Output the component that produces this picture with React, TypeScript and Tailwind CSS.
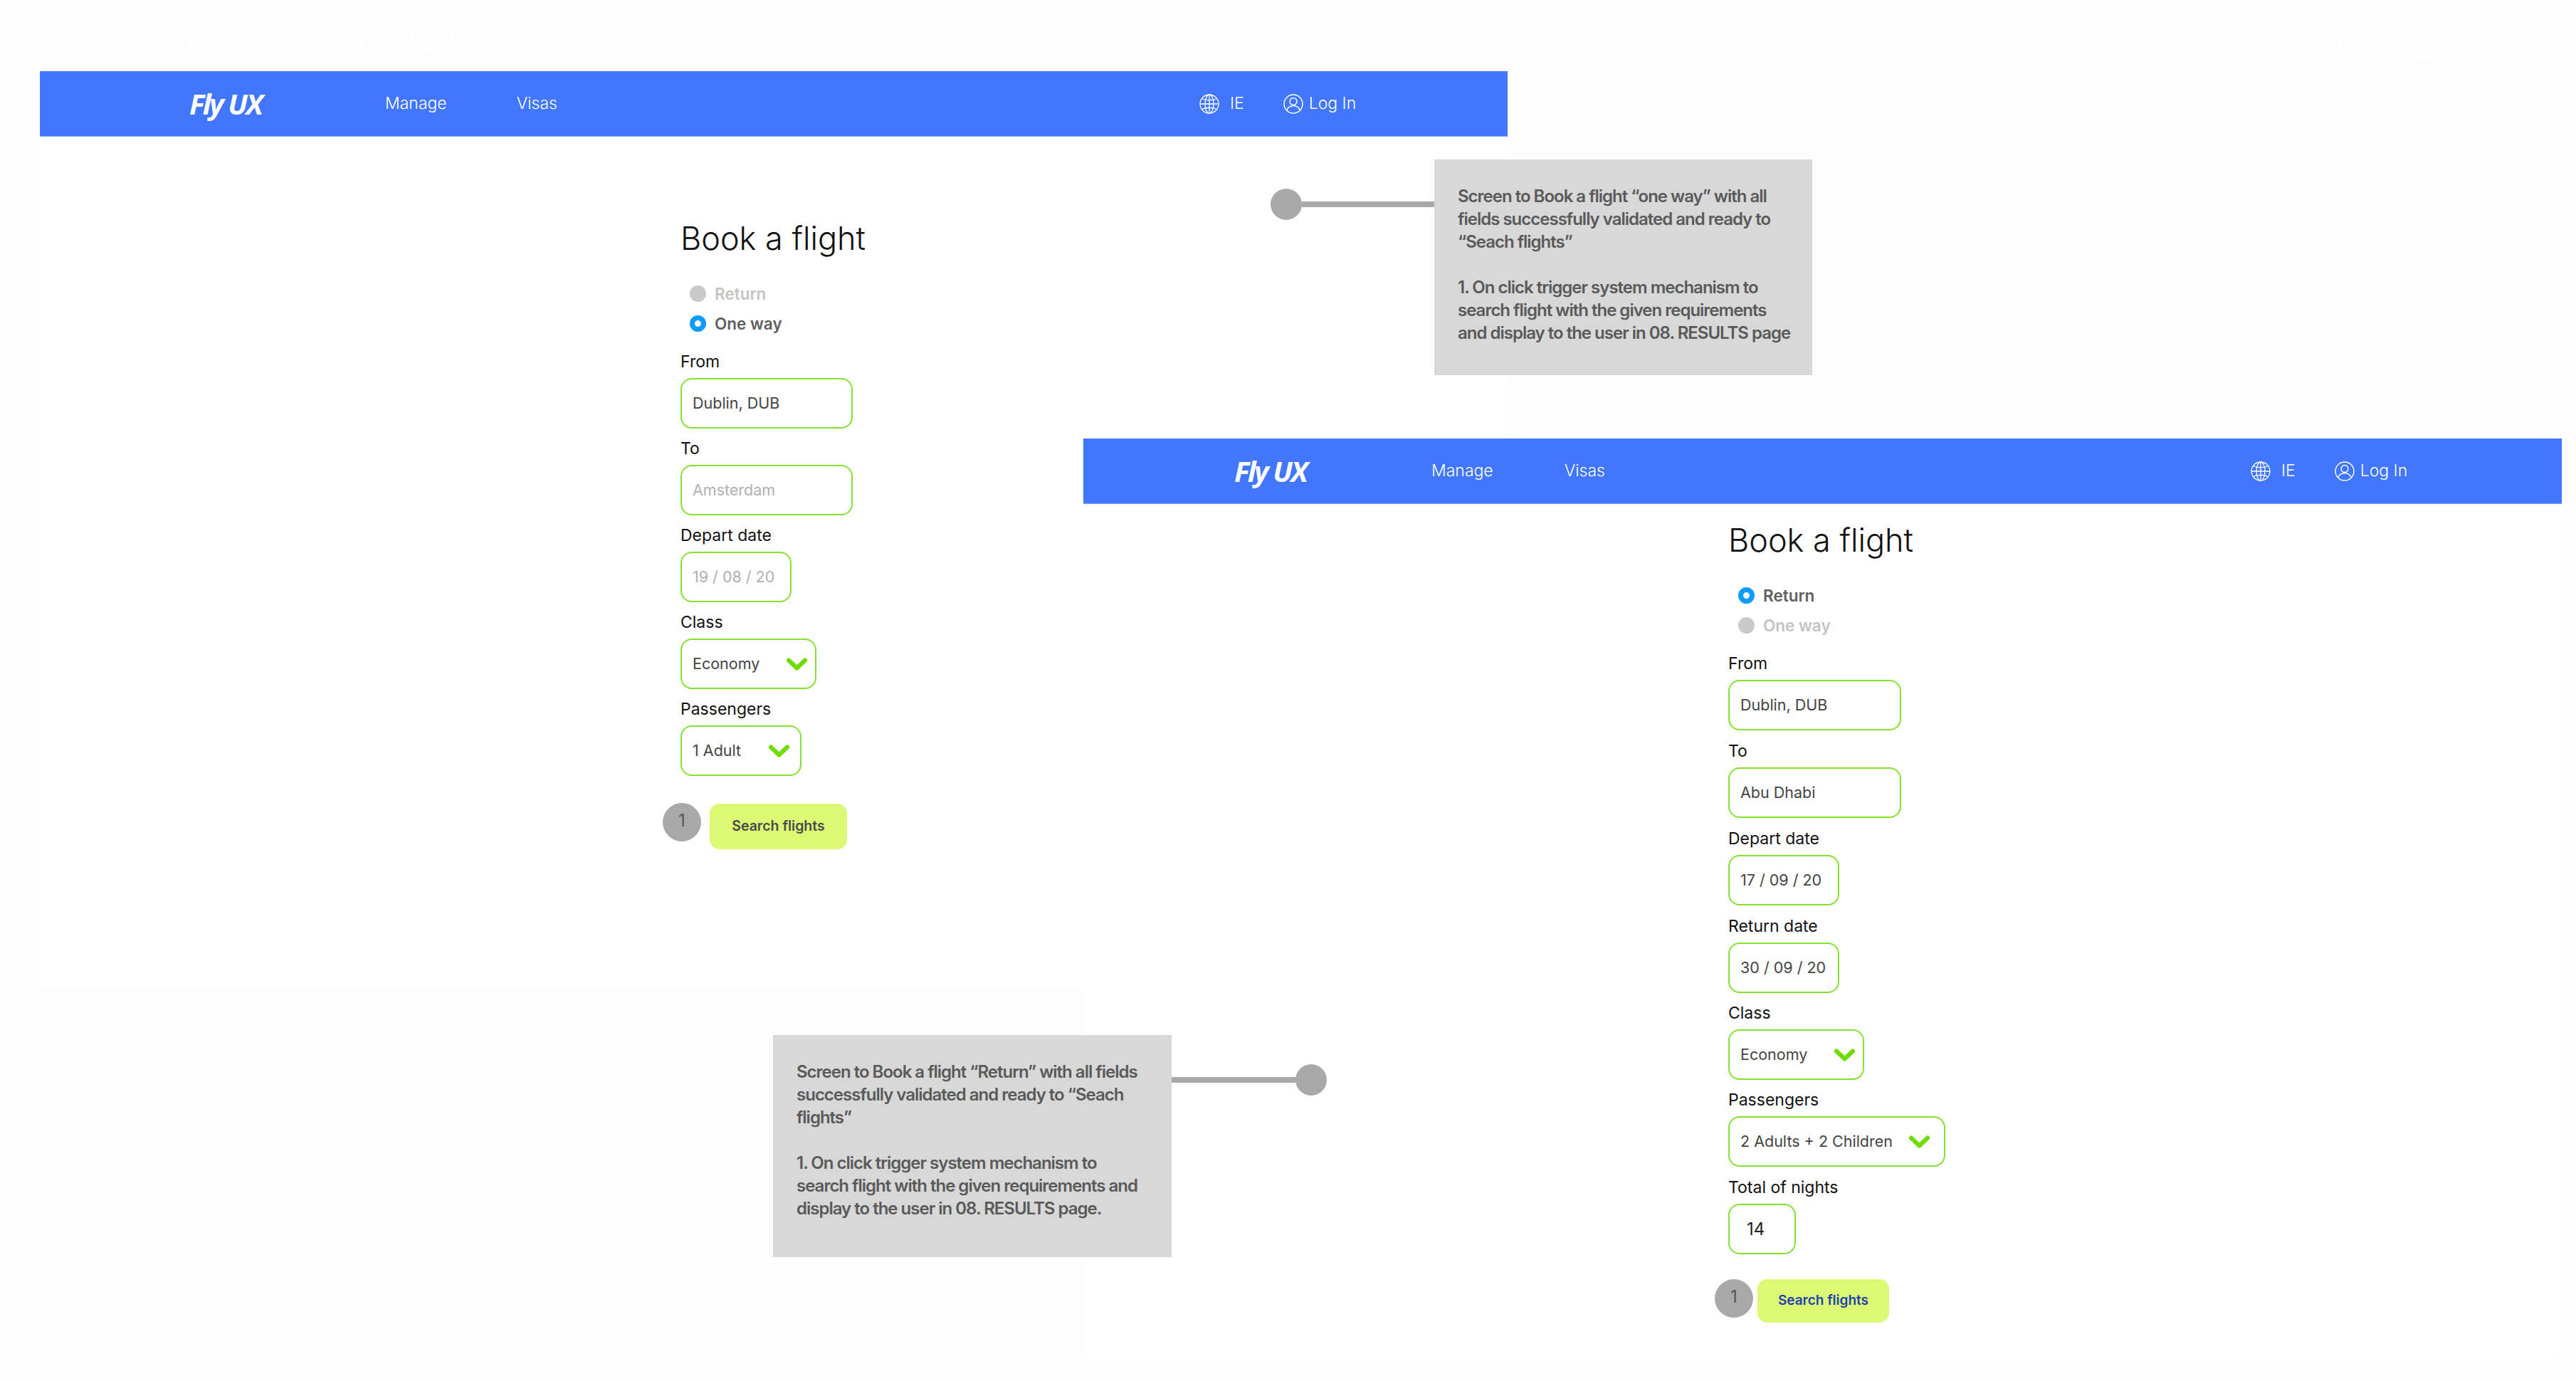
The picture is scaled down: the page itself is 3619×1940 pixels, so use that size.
import React from 'react';

const inter = 'font-["Inter",sans-serif]';

function GlobeIcon() {
  return (
    <svg width="28" height="28" viewBox="0 0 28 28" fill="none" stroke="white" strokeWidth="1.3">
      <circle cx="14" cy="14" r="13" />
      <ellipse cx="14" cy="14" rx="6" ry="13" />
      <path d="M14 1v26M1 14h26M3.500 6.500c6 3 15 3 21 0M3.500 21.500c6-3 15-3 21 0" />
    </svg>
  );
}

function UserIcon() {
  return (
    <svg width="28" height="28" viewBox="0 0 28 28" fill="none" stroke="white" strokeWidth="1.4">
      <circle cx="14" cy="14" r="13" />
      <circle cx="14" cy="10.5" r="5" />
      <path d="M4.500 23c2-4.500 5.500-6.500 9.500-6.500s7.500 2 9.500 6.500" />
    </svg>
  );
}

function Chevron() {
  return (
    <svg width="29" height="18" viewBox="0 0 29 18" fill="none" stroke="#6fdc00" strokeWidth="6" strokeLinecap="round" strokeLinejoin="round" className="shrink-0">
      <path d="M3 3.500L14.500 14.500L26 3.500" />
    </svg>
  );
}

function NavBar({ logoPad, navPad, rightPad, navGap }: { logoPad: string; navPad: string; rightPad: string; navGap: string }) {
  return (
    <header className={`h-[92px] bg-[#4176ff] border-b border-[#7fa3ff] flex items-center text-white ${inter} ${logoPad}`}>
      <span className="w-[108px] text-[40px] leading-none font-bold italic font-['Open_Sans',sans-serif] tracking-[-2.5px] whitespace-nowrap">
        Fly UX
      </span>
      <nav className={`flex text-[23px] font-light ${navGap} ${navPad}`}>
        <span>Manage</span>
        <span>Visas</span>
      </nav>
      <div className={`flex items-center gap-[55px] text-[23px] font-light ${rightPad}`}>
        <div className="flex items-center gap-[15px]">
          <GlobeIcon />
          <span>IE</span>
        </div>
        <div className="flex items-center gap-[8px]">
          <UserIcon />
          <span>Log In</span>
        </div>
      </div>
    </header>
  );
}

function Radio({ label, on }: { label: string; on: boolean }) {
  return (
    <div className={`flex items-center gap-3 h-[23px] text-[22.5px] font-semibold ${on ? 'text-[#606060]' : 'text-[#c4c4c4]'}`}>
      {on ? (
        <span className="w-[23px] h-[23px] rounded-full border-[7px] border-[#0c9bff] bg-white" />
      ) : (
        <span className="w-[23px] h-[23px] rounded-full bg-[#c9c9c9]" />
      )}
      <span>{label}</span>
    </div>
  );
}

function Field({ label, value, width, tone = 'text-[#444444] text-[21.5px]', select, pad = 'pl-[15px]', right = 'pr-[11px]', top = 'mt-[9px]' }: {
  label: string;
  value: string;
  width: string;
  tone?: string;
  select?: boolean;
  pad?: string;
  right?: string;
  top?: string;
}) {
  return (
    <div className="flex flex-col">
      <label className={`h-[38px] text-[23px] leading-[38px] text-[#111111] mb-[4px] ${top}`}>{label}</label>
      <div className={`h-[71px] rounded-[16px] border-2 border-[#85e02f] bg-white flex items-center justify-between ${pad} ${right} ${width} ${tone}`}>
        <span className="whitespace-nowrap">{value}</span>
        {select && <Chevron />}
      </div>
    </div>
  );
}

function Callout({ lines, className, lineWidth, reverse }: { lines: string[]; className: string; lineWidth: string; reverse?: boolean }) {
  return (
    <div className={`absolute flex items-start ${reverse ? 'flex-row-reverse' : ''} ${className}`}>
      <div className={`flex items-center h-[44px] mt-[41px] ${reverse ? 'flex-row-reverse' : ''}`}>
        <span className="w-[44px] h-[44px] rounded-full bg-[#a9a9a9] shrink-0" />
        <span className={`h-[8px] bg-[#a9a9a9] ${lineWidth}`} />
      </div>
      <div className="bg-[#d8d8d8] h-full flex-1 pt-[36px] pl-[33px] text-[24px] leading-[32px] font-semibold tracking-[-1px] text-[#5a5a5a] whitespace-pre overflow-hidden">
        {lines.join('\n')}
      </div>
    </div>
  );
}

export default function App() {
  return (
    <div className={`relative w-[3619px] h-[1940px] overflow-hidden bg-[#fdfdfd] ${inter}`}>
      {/* artboard heading, white on near white in the source */}
      <div className="absolute left-[56px] top-[40px] w-[3506px] h-[42px] border-b-2 border-white flex justify-between pl-[4px] pr-[13px] text-[36px] leading-[38px] font-light text-white whitespace-nowrap">
        <span>07. BOOK A FLIGHT - VALIDATED FORMS</span>
        <span>19 - August - 20</span>
      </div>

      {/* one way screen */}
      <section className="absolute left-[56px] top-[100px] w-[2062px] h-[1290px] bg-white">
        <NavBar logoPad="pl-[210px]" navPad="pl-[167px]" navGap="gap-[98px]" rightPad="pl-[902px]" />
        <div className="pl-[900px] pt-[114px]">
          <h1 className="text-[45px] leading-[58px] text-[#111111] font-[350] mb-[37px]">Book a flight</h1>
          <div className="flex flex-col gap-[19px] pl-[13px] mb-[14px]">
            <Radio label="Return" on={false} />
            <Radio label="One way" on />
          </div>
          <Field label="From" value="Dublin, DUB" width="w-[242px]" />
          <Field label="To" value="Amsterdam" width="w-[242px]" tone="text-[#b0b0b0] text-[21.5px]" />
          <Field label="Depart date" value="19 / 08 / 20" width="w-[156px]" tone="text-[#b0b0b0] text-[21.5px]" />
          <Field label="Class" value="Economy" width="w-[191px]" select />
          <Field label="Passengers" value="1 Adult" width="w-[170px]" select right="pr-[15px]" />
          <div className="flex items-start gap-3 mt-[38px] -ml-[25px]">
            <span className="w-[54px] h-[54px] rounded-full bg-[#a9a9a9] flex items-center justify-center pb-1 text-[24px] text-[#555555]">1</span>
            <button className="w-[193px] h-[64px] mt-px rounded-[14px] bg-[#dcf975] text-[19.5px] font-semibold text-[#4a4a4a]">Search flights</button>
          </div>
        </div>
      </section>

      {/* return screen */}
      <section className="absolute left-[1522px] top-[616px] w-[2077px] h-[1290px] bg-white">
        <NavBar logoPad="pl-[212px]" navPad="pl-[169px]" navGap="gap-[100px]" rightPad="pl-[907px]" />
        <div className="pl-[906px] pt-[22px]">
          <h1 className="text-[45px] leading-[58px] text-[#111111] font-[350] mb-[37px]">Book a flight</h1>
          <div className="flex flex-col gap-[19px] pl-[14px] mb-[13px]">
            <Radio label="Return" on />
            <Radio label="One way" on={false} />
          </div>
          <Field label="From" value="Dublin, DUB" width="w-[243px]" top="mt-[10px]" />
          <Field label="To" value="Abu Dhabi" width="w-[243px]" top="mt-[10px]" />
          <Field label="Depart date" value="17 / 09 / 20" width="w-[156px]" top="mt-[10px]" />
          <Field label="Return date" value="30 / 09 / 20" width="w-[156px]" top="mt-[10px]" />
          <Field label="Class" value="Economy" width="w-[191px]" select />
          <Field label="Passengers" value="2 Adults + 2 Children" width="w-[305px]" select right="pr-[20px]" />
          <Field label="Total of nights" value="14" width="w-[95px]" tone="text-[#222222] text-[24px]" pad="pl-[24px]" top="mt-[10px]" />
          <div className="flex items-start gap-[6px] mt-[35px] -ml-[19px]">
            <span className="w-[54px] h-[54px] rounded-full bg-[#a9a9a9] flex items-center justify-center pb-1 text-[24px] text-[#555555]">1</span>
            <button className="w-[185px] h-[61px] rounded-[14px] bg-[#dcf975] text-[19px] font-semibold text-[#1e40af]">Search flights</button>
          </div>
        </div>
      </section>

      <Callout
        lineWidth="w-[186px]"
        className="left-[1785px] top-[224px] w-[761px] h-[303px]"
        lines={[
          'Screen to Book a flight “one way” with all',
          'fields successfully validated and ready to',
          '“Seach flights”',
          '',
          '1. On click trigger system mechanism to',
          'search flight with the given requirements',
          'and display to the user in 08. RESULTS page',
        ]}
      />

      <Callout
        reverse
        lineWidth="w-[174px]"
        className="left-[1086px] top-[1454px] w-[778px] h-[312px]"
        lines={[
          'Screen to Book a flight “Return” with all fields',
          'successfully validated and ready to “Seach',
          'flights”',
          '',
          '1. On click trigger system mechanism to',
          'search flight with the given requirements and',
          'display to the user in 08. RESULTS page.',
        ]}
      />
    </div>
  );
}
